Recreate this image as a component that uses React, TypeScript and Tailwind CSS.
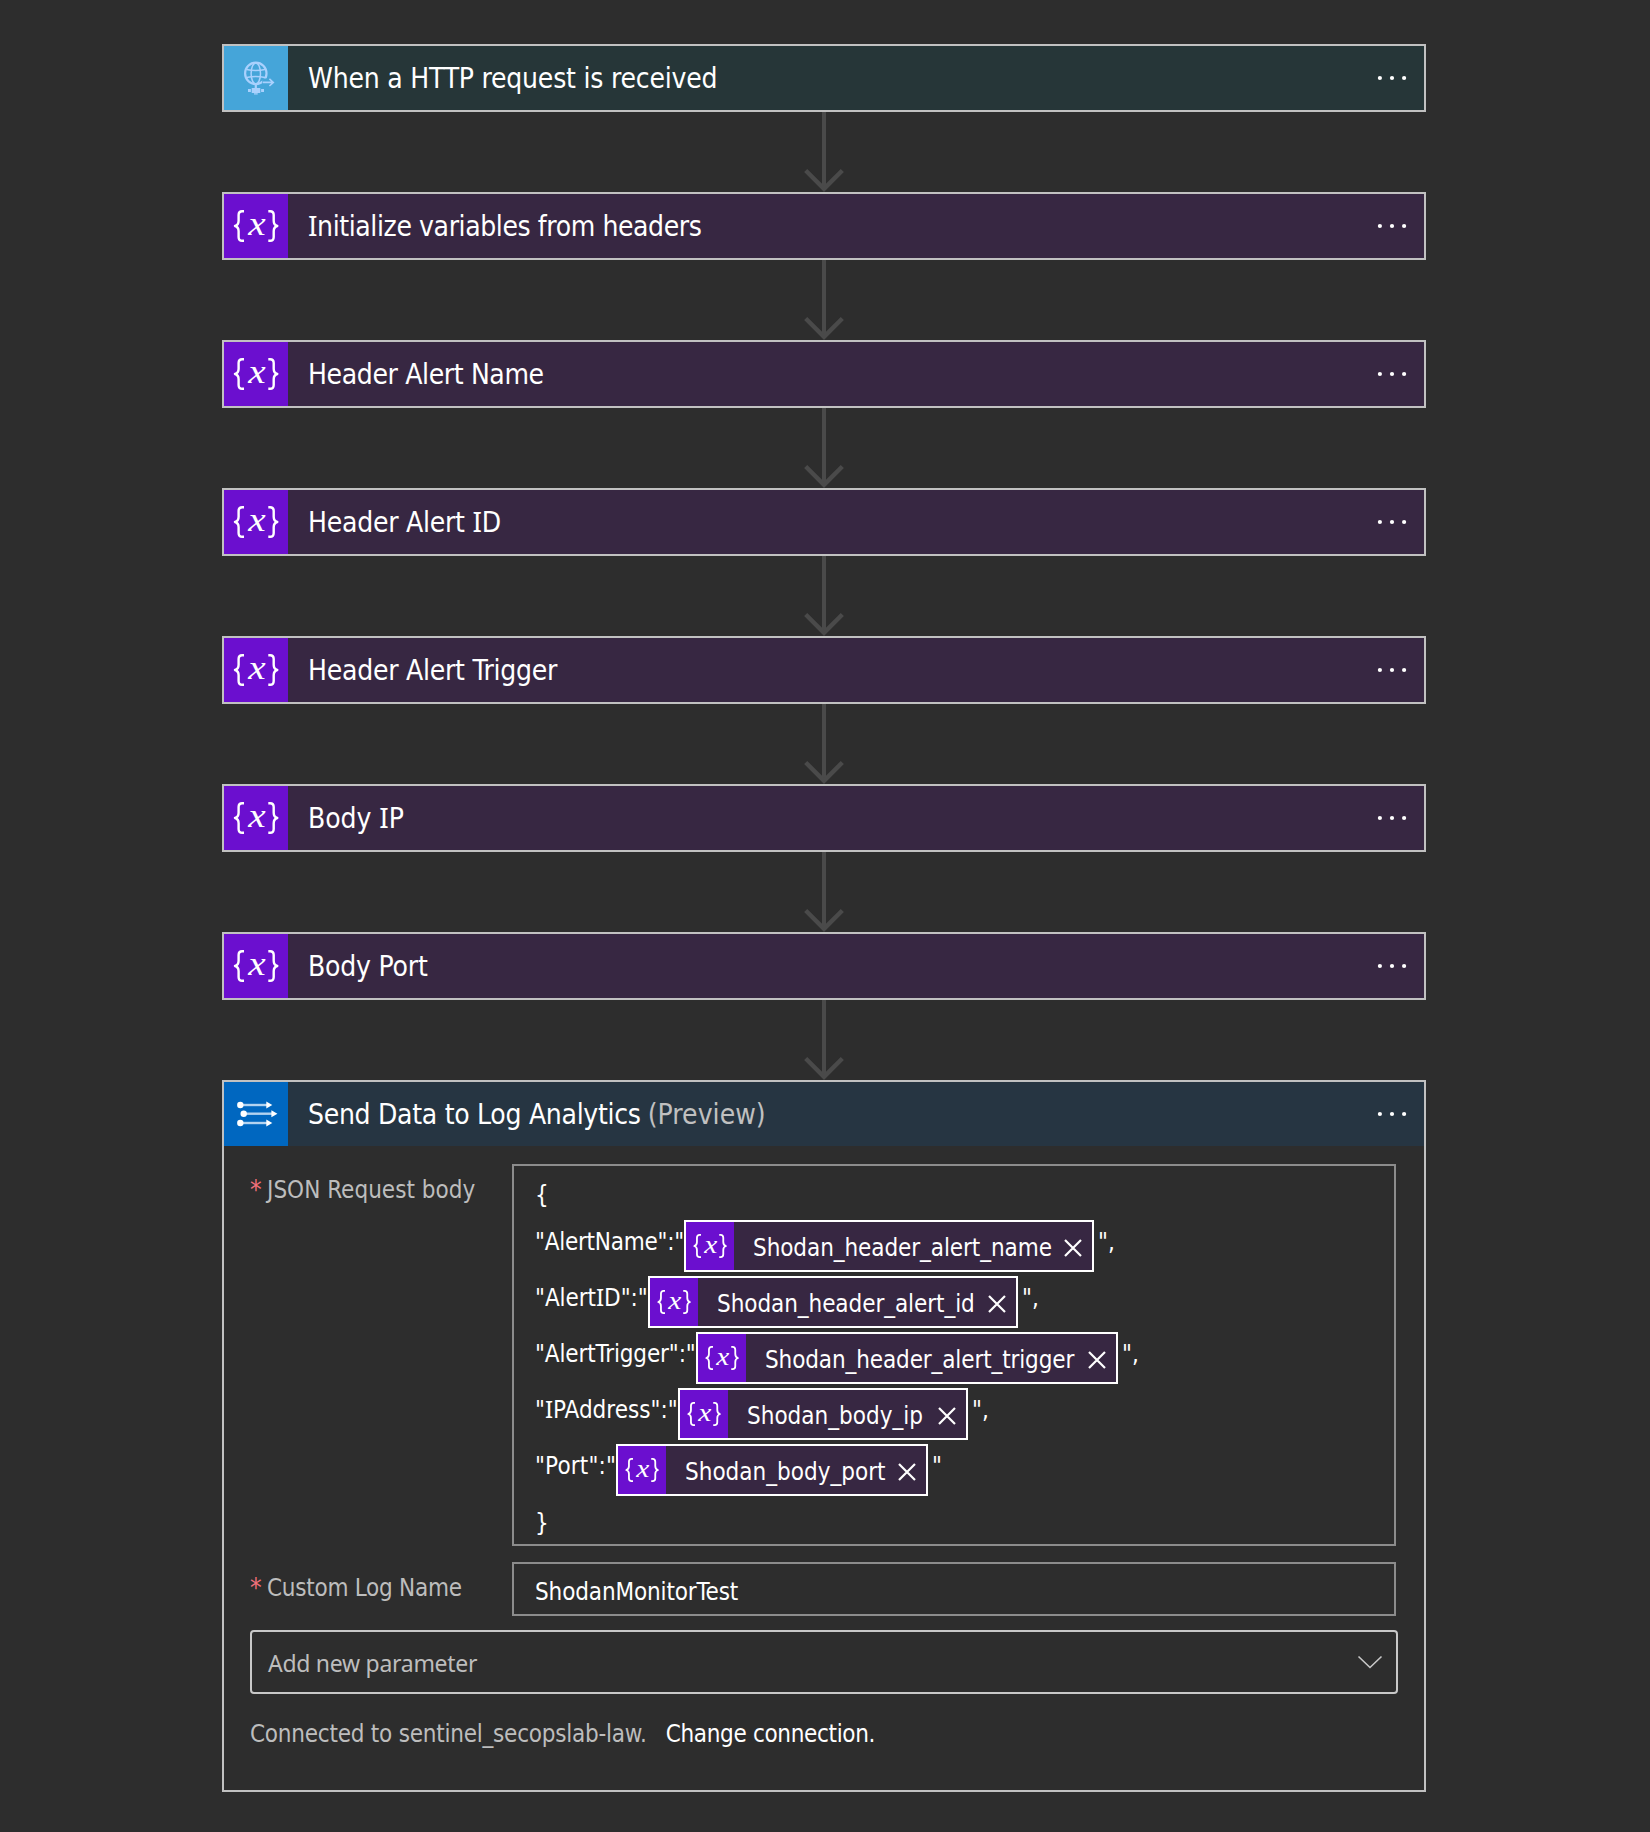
import React, { Fragment } from "react";

const UI = "font-['DejaVu_Sans_Condensed','DejaVu_Sans',sans-serif] [font-stretch:condensed]";

function T({ children, className = "" }: { children: string; className?: string }) {
  const parts = children.split("I");
  return (
    <span className={`whitespace-pre ${className}`}>
      {parts.map((p, i) => (
        <Fragment key={i}>
          {i > 0 && <span className="font-['Noto_Sans',sans-serif] leading-[0]">I</span>}
          {p}
        </Fragment>
      ))}
    </span>
  );
}

function VariableIcon({ className }: { className: string }) {
  return (
    <svg viewBox="0 0 64 64" className={className} fill="none">
      <path
        d="M20 17.2h-1.800c-2.400 0-3.600 1.300-3.600 3.900v5.600c0 2.800-1.100 4.600-3.600 5.300 2.500.7 3.600 2.500 3.600 5.300v5.600c0 2.600 1.200 3.900 3.600 3.900H20M44.300 17.200h1.800c2.400 0 3.600 1.300 3.600 3.900v5.600c0 2.800 1.100 4.600 3.600 5.300-2.500.7-3.600 2.500-3.600 5.300v5.600c0 2.600-1.200 3.900-3.600 3.900h-1.800"
        stroke="#fff"
        strokeWidth="2.400"
        strokeLinejoin="round"
      />
      <text
        x="0"
        y="0"
        transform="translate(24.300 40.700) scale(1.120 1)"
        fontSize="35"
        fontStyle="italic"
        fill="#fff"
        fontFamily="'Liberation Serif', serif"
        textRendering="geometricPrecision"
      >
        x
      </text>
    </svg>
  );
}

function GlobeIcon() {
  return (
    <svg viewBox="0 0 64 64" className="size-16" fill="none" stroke="#a9d1fd">
      <circle cx="31.800" cy="27.400" r="10.700" strokeWidth="2.200" />
      <ellipse cx="31.800" cy="27.400" rx="4.700" ry="10.500" strokeWidth="1.500" />
      <path d="M22.500 23.500q9.300 2 18.600 0M22.500 31.500q9.300-2 18.600 0" strokeWidth="1.400" />
      <path d="M38.200 32.500h7v7h-7z" fill="#45a5d9" stroke="none" />
      <path d="M38.700 36.400h10.600M45.400 32.800l3.900 3.600-3.900 3.600" strokeWidth="1.600" />
      <path d="M31.800 38.500v4" strokeWidth="2.200" />
      <path
        d="M27.700 42h8.600v5h-8.600zM24 43h2.900v2.900H24zM37.100 43H40v2.900h-2.900zM30 47.300h3.700v1.200H30z"
        fill="#a9d1fd"
        stroke="none"
      />
    </svg>
  );
}

function LogIcon() {
  const rows = [
    [16.3, 23, 48.3],
    [19.7, 31.7, 53.4],
    [16.3, 41, 48.3],
  ];
  return (
    <svg viewBox="0 0 64 64" className="size-16">
      {rows.map(([x, y, tip]) => (
        <g key={y}>
          <path d={`M${x} ${y}H${tip - 5}`} stroke="#b3d3f0" strokeWidth="2.400" />
          <circle cx={x} cy={y} r="3.200" fill="#fff" />
          <path d={`M${tip - 6} ${y - 3.5}l6 3.500-6 3.500z`} fill="#fff" />
        </g>
      ))}
    </svg>
  );
}

function Dots() {
  return (
    <svg viewBox="0 0 32 8" className="mr-4 ml-auto h-2 w-8" fill="#fff">
      <circle cx="3.900" cy="4" r="2.100" />
      <circle cx="16" cy="4" r="2.100" />
      <circle cx="28.100" cy="4" r="2.100" />
    </svg>
  );
}

function Arrow() {
  return (
    <svg viewBox="0 0 44 80" className="h-20 w-11 self-center" fill="none" stroke="#4a4a4a" strokeWidth="4.400">
      <path d="M22 0v76" strokeWidth="4" />
      <path d="M3.700 58.500L22 76.800l18.300-18.300" />
    </svg>
  );
}

const steps = [
  { title: "When a HTTP request is received", track: "tracking-[-0.22px]", http: true },
  { title: "Initialize variables from headers", track: "tracking-[-0.4px]" },
  { title: "Header Alert Name", track: "tracking-[-0.37px]" },
  { title: "Header Alert ID", track: "tracking-[-0.25px]" },
  { title: "Header Alert Trigger", track: "tracking-[-0.25px]" },
  { title: "Body IP", track: "tracking-[-0.05px]" },
  { title: "Body Port", track: "tracking-[-0.2px]" },
];

const fields = [
  { key: '"AlertName":"', kw: "w-[149px] tracking-[-0.25px]", name: "Shodan_header_alert_name", w: "w-[410px] tracking-[-0.08px]", end: '",' },
  { key: '"AlertID":"', kw: "w-[113px] tracking-[-0.05px]", name: "Shodan_header_alert_id", w: "w-[370px] tracking-[-0.07px]", end: '",' },
  { key: '"AlertTrigger":"', kw: "w-[161px] tracking-[-0.12px]", name: "Shodan_header_alert_trigger", w: "w-[422px] tracking-[-0.12px]", end: '",' },
  { key: '"IPAddress":"', kw: "w-[143px] tracking-[0px]", name: "Shodan_body_ip", w: "w-[290px]", end: '",' },
  { key: '"Port":"', kw: "w-[81px] tracking-[0.15px]", name: "Shodan_body_port", w: "w-[312px]", end: '"' },
];

export default function App() {
  return (
    <div className={`flex min-h-[1832px] w-[1650px] flex-col bg-[#2d2d2d] pt-11 pl-[222px] text-white ${UI}`}>
      <div className="flex w-[1204px] flex-col">
        {steps.map((s) => (
          <Fragment key={s.title}>
            <div className={`flex h-[68px] items-center border-2 border-[#c1c1c1] ${s.http ? "bg-[#263638]" : "bg-[#372742]"}`}>
              <div className={`size-16 ${s.http ? "bg-[#45a5d9]" : "bg-[#6b0fcf]"}`}>
                {s.http ? <GlobeIcon /> : <VariableIcon className="size-16" />}
              </div>
              <T className={`mt-0.5 ml-5 text-[28px] leading-none ${s.track}`}>{s.title}</T>
              <Dots />
            </div>
            <Arrow />
          </Fragment>
        ))}

        <div className="h-[712px] border-2 border-[#c1c1c1]">
          <div className="flex h-16 items-center bg-[#263542]">
            <div className="size-16 bg-[#0067c0]">
              <LogIcon />
            </div>
            <T className="mt-0.5 ml-5 text-[28px] leading-none tracking-[-0.29px]">Send Data to Log Analytics</T>
            <T className="mt-0.5 ml-[7px] text-[28px] leading-none tracking-[0.05px] text-[#c0c0c0]">(Preview)</T>
            <Dots />
          </div>

          <div className="flex flex-col pt-[18px] pl-[26px] text-2xl">
            <div className="flex">
              <div className="flex w-[262px] pt-2 leading-[36px] text-[#bdbdbd]">
                <span className="w-[17px] text-[26px] text-[#f1707b]">*</span>
                <T className="tracking-[0.02px]">JSON Request body</T>
              </div>
              <div className="h-[382px] w-[884px] border-2 border-[#8c8c8c] pl-[21px]">
                <div className="h-[52px] pt-[5px] leading-[48px]">{"{"}</div>
                {fields.map((f) => (
                  <div key={f.key} className="flex h-14 leading-[48px]">
                    <T className={f.kw}>{f.key}</T>
                    <div className={`mt-0.5 flex h-[52px] items-center border-2 border-white bg-[#372742] ${f.w}`}>
                      <div className="size-12 bg-[#6b0fcf]">
                        <VariableIcon className="size-12" />
                      </div>
                      <T className="mt-[3px] ml-[19px]">{f.name}</T>
                      <svg viewBox="0 0 18 18" className="mt-[3px] mr-2.5 ml-auto size-[18px]" fill="none" stroke="#fff" strokeWidth="2.200">
                        <path d="M1 1l16 16M17 1L1 17" />
                      </svg>
                    </div>
                    <span className="ml-1">{f.end}</span>
                  </div>
                ))}
                <div className="pt-px leading-[48px]">{"}"}</div>
              </div>
            </div>

            <div className="mt-4 flex">
              <div className="flex w-[262px] pt-2 leading-[36px] text-[#bdbdbd]">
                <span className="w-[17px] text-[26px] text-[#f1707b]">*</span>
                <T className="tracking-[-0.26px]">Custom Log Name</T>
              </div>
              <div className="h-[54px] w-[884px] border-2 border-[#8c8c8c] pt-px pl-[21px] leading-[54px]">
                <T className="tracking-[-0.13px]">ShodanMonitorTest</T>
              </div>
            </div>

            <div className="mt-3.5 flex h-16 w-[1148px] items-center rounded border-2 border-[#c8c8c8] pl-4">
              <span className="mt-0.5 font-['Noto_Sans',sans-serif] text-[23px] leading-none tracking-[-0.28px] text-[#bdbdbd]">
                Add new parameter
              </span>
              <svg viewBox="0 0 26 14" className="mr-[13px] ml-auto h-3.5 w-[26px]" fill="none" stroke="#c8c8c8" strokeWidth="1.600">
                <path d="M1.500 1.500L13 12.500 24.500 1.500" />
              </svg>
            </div>

            <div className="mt-[22px] flex leading-[36px]">
              <T className="tracking-[-0.23px] text-[#bdbdbd]">Connected to sentinel_secopslab-law.</T>
              <T className="ml-[19px] tracking-[-0.33px]">Change connection.</T>
            </div>
          </div>
        </div>
      </div>
    </div>
  );
}
